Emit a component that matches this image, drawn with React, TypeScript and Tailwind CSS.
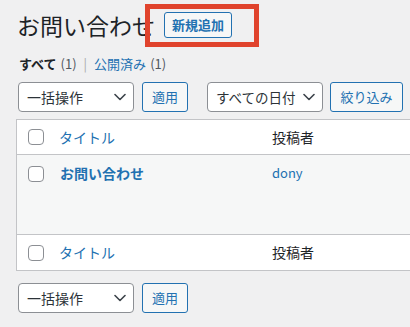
import React from "react";

const font = { fontFamily: '"Noto Sans CJK JP", "Noto Sans", sans-serif' };

function Chevron() {
  return (
    <svg width="12" height="8" viewBox="0 0 12 8" className="shrink-0">
      <path d="M1 1.5 L6 6.5 L11 1.5" fill="none" stroke="#3c434a" strokeWidth="1.6" strokeLinecap="round" strokeLinejoin="round" />
    </svg>
  );
}

function Select({ label, w, text }: { label: string; w: string; text: string }) {
  return (
    <div className={`flex items-center justify-between h-[30px] ${w} bg-white border border-[#8c8f94] rounded-[4px] pl-[8px] pr-[7px] ${text} text-[#2c3338]`}>
      <span>{label}</span>
      <Chevron />
    </div>
  );
}

function Btn({ label, w }: { label: string; w: string }) {
  return (
    <div className={`flex items-center justify-center h-[30px] ${w} bg-[#f6f7f7] border border-[#2271b1] rounded-[3px] text-[13px] text-[#2271b1]`}>
      {label}
    </div>
  );
}

function Check() {
  return <div className="w-[16px] h-[16px] bg-white border border-[#8c8f94] rounded-[4px] shrink-0" />;
}

export default function App() {
  return (
    <div className="w-[410px] h-[327px] bg-[#f0f0f1] overflow-hidden relative" style={font}>
      {/* header */}
      <div className="flex items-center h-[50px] pl-[17px]">
        <h1 className="text-[23px] leading-[30px] text-[#1d2327] font-normal">お問い合わせ</h1>
        <div className="ml-[9px] flex items-center justify-center h-[26px] w-[68px] bg-[#f6f7f7] border border-[#2271b1] rounded-[3px] text-[13px] font-semibold text-[#2271b1]">
          新規追加
        </div>
      </div>
      <div className="absolute left-[145px] top-[4px] w-[114px] h-[43px] border-[5px] border-[#e0432d]" />

      {/* subsubsub */}
      <div className="mt-[4px] h-[20px] flex items-center pl-[19px] text-[13px] leading-[20px]">
        <span className="font-bold text-[#1d2327]">すべて</span>
        <span className="ml-[4px] text-[#50575e]">(1)</span>
        <span className="ml-[7px] mr-[7px] text-[#a7aaad]">|</span>
        <span className="text-[#2271b1]">公開済み</span>
        <span className="ml-[4px] text-[#50575e]">(1)</span>
      </div>

      {/* tablenav top */}
      <div className="mt-[8px] flex items-center pl-[18px]">
        <Select label="一括操作" w="w-[116px]" text="text-[14px]" />
        <div className="ml-[8px]">
          <Btn label="適用" w="w-[46px]" />
        </div>
        <div className="ml-[19px]">
          <Select label="すべての日付" w="w-[116px]" text="text-[13.5px]" />
        </div>
        <div className="ml-[7px]">
          <Btn label="絞り込み" w="w-[73px]" />
        </div>
      </div>

      {/* table */}
      <div className="mt-[7px] ml-[16px] w-[520px] border border-[#c3c4c7] bg-white">
        <div className="flex items-center h-[35px] border-b border-[#c3c4c7] pl-[11px]">
          <Check />
          <span className="ml-[15px] w-[213px] text-[14px] text-[#2271b1]">タイトル</span>
          <span className="text-[14px] text-[#1d2327]">投稿者</span>
        </div>
        <div className="flex items-start h-[79px] bg-[#f6f7f7] pl-[11px] pt-[11px]">
          <Check />
          <span className="ml-[16px] w-[212px] -mt-[3px] text-[14px] leading-[20px] font-bold text-[#2271b1]">お問い合わせ</span>
          <span className="-mt-[3px] text-[13px] leading-[20px] text-[#2271b1]">dony</span>
        </div>
        <div className="flex items-center h-[36px] border-t border-[#c3c4c7] pl-[11px]">
          <Check />
          <span className="ml-[15px] w-[213px] text-[14px] text-[#2271b1]">タイトル</span>
          <span className="text-[14px] text-[#1d2327]">投稿者</span>
        </div>
      </div>

      {/* tablenav bottom */}
      <div className="mt-[12px] flex items-center pl-[18px]">
        <Select label="一括操作" w="w-[116px]" text="text-[14px]" />
        <div className="ml-[8px]">
          <Btn label="適用" w="w-[46px]" />
        </div>
      </div>
    </div>
  );
}
